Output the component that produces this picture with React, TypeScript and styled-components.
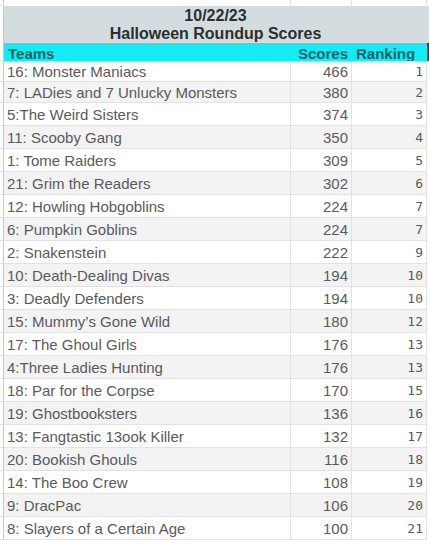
import React from 'react';
import styled, { createGlobalStyle } from 'styled-components';

const GlobalStyle = createGlobalStyle`
    html, body {
        margin: 0;
        padding: 0;
        background: #ffffff;
    }
    body {
        font-family: "Liberation Sans", Arial, sans-serif;
        overflow: hidden;
    }
`;

const COLUMNS = '4px 287px 61px 75px 2px';

const Sheet = styled.div`
    width: 429px;
    display: flex;
    flex-direction: column;
`;

const GridRow = styled.div<{ $height: number; $shade?: boolean }>`
    display: grid;
    grid-template-columns: ${COLUMNS};
    height: ${(p) => p.$height}px;
    background: ${(p) => (p.$shade ? '#f3f3f3' : '#ffffff')};
`;

const Gutter = styled.div`
    background: #ffffff;
    border-right: 1px solid #c8c8c8;
    border-bottom: 1px solid #e2e2e2;
`;

const EdgeCell = styled.div<{ $dark?: boolean }>`
    background: ${(p) => (p.$dark ? '#3a3a3a' : '#ffffff')};
`;

const BlankCell = styled.div`
    border-right: 1px solid #e2e2e2;
`;

const BannerRow = styled.div<{ $height: number }>`
    display: grid;
    grid-template-columns: 4px 425px;
    height: ${(p) => p.$height}px;
`;

const BannerCell = styled.div<{ $line?: boolean }>`
    background: #d3dde0;
    border-bottom: 1px solid ${(p) => (p.$line ? '#c4cfd2' : '#d3dde0')};
    color: #2e2e2e;
    font-weight: 700;
    font-size: 16px;
    display: flex;
    align-items: center;
    justify-content: center;
    padding: 1px 2px 0 0;
`;

const HeaderCell = styled.div<{ $align?: 'left' | 'right' }>`
    background: #14ebf2;
    color: #0f5f68;
    font-weight: 700;
    font-size: 15px;
    line-height: 18px;
    padding: 2px 4px 0;
    overflow: hidden;
    white-space: nowrap;
    text-align: ${(p) => p.$align ?? 'left'};
`;

const Cell = styled.div<{ $align?: 'left' | 'right'; $mono?: boolean }>`
    border-right: 1px solid #e2e2e2;
    border-bottom: 1px solid #e2e2e2;
    color: #5a5a5a;
    font-family: ${(p) =>
        p.$mono ? '"DejaVu Sans Mono", "Liberation Mono", monospace' : '"Liberation Sans", Arial, sans-serif'};
    font-size: ${(p) => (p.$mono ? '13px' : '15px')};
    display: flex;
    align-items: center;
    justify-content: ${(p) => (p.$align === 'right' ? 'flex-end' : 'flex-start')};
    padding: 1px 3px 0 3px;
    white-space: nowrap;
    overflow: hidden;
`;

const teams: [string, number, number][] = [
    ['16: Monster Maniacs', 466, 1],
    ['7: LADies and 7 Unlucky Monsters', 380, 2],
    ['5:The Weird Sisters', 374, 3],
    ['11: Scooby Gang', 350, 4],
    ['1: Tome Raiders', 309, 5],
    ['21: Grim the Readers', 302, 6],
    ['12: Howling Hobgoblins', 224, 7],
    ['6: Pumpkin Goblins', 224, 7],
    ['2: Snakenstein', 222, 9],
    ['10: Death-Dealing Divas', 194, 10],
    ['3: Deadly Defenders', 194, 10],
    ['15: Mummy\u2019s Gone Wild', 180, 12],
    ['17: The Ghoul Girls', 176, 13],
    ['4:Three Ladies Hunting', 176, 13],
    ['18: Par for the Corpse', 170, 15],
    ['19: Ghostbooksters', 136, 16],
    ['13: Fangtastic 13ook Killer', 132, 17],
    ['20: Bookish Ghouls', 116, 18],
    ['14: The Boo Crew', 108, 19],
    ['9: DracPac', 106, 20],
    ['8: Slayers of a Certain Age', 100, 21],
];

export default function App() {
    return (
        <>
            <GlobalStyle />
            <Sheet>
                <GridRow $height={6}>
                    <Gutter />
                    <BlankCell />
                    <BlankCell />
                    <BlankCell />
                    <EdgeCell />
                </GridRow>
                <BannerRow $height={18}>
                    <Gutter />
                    <BannerCell $line>10/22/23</BannerCell>
                </BannerRow>
                <BannerRow $height={19}>
                    <Gutter />
                    <BannerCell>Halloween Roundup Scores</BannerCell>
                </BannerRow>
                <GridRow $height={18}>
                    <Gutter />
                    <HeaderCell>Teams</HeaderCell>
                    <HeaderCell $align="right">Scores</HeaderCell>
                    <HeaderCell>Ranking</HeaderCell>
                    <EdgeCell $dark />
                </GridRow>
                {teams.map(([name, score, rank], i) => (
                    <GridRow key={name} $height={i < 2 ? 21 : 23} $shade={i % 2 === 1}>
                        <Gutter />
                        <Cell>{name}</Cell>
                        <Cell $align="right">{score}</Cell>
                        <Cell $align="right" $mono>
                            {rank}
                        </Cell>
                        <EdgeCell />
                    </GridRow>
                ))}
            </Sheet>
        </>
    );
}
